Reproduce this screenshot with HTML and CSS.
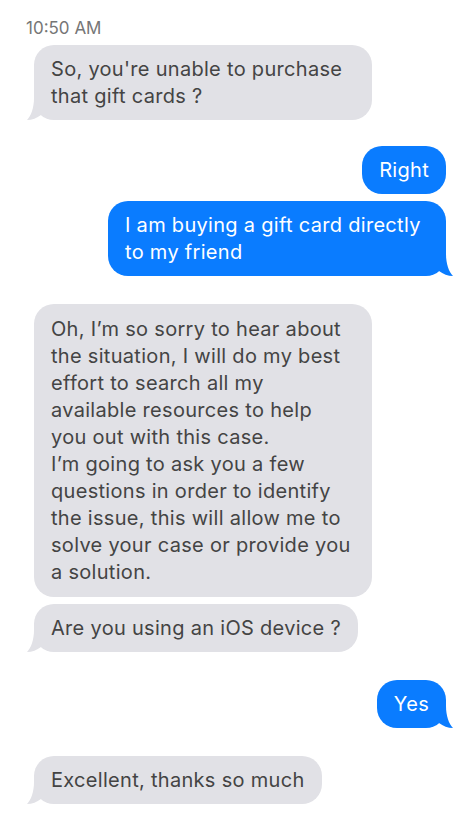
FILE: index.html
```html
<!DOCTYPE html>
<html>
<head>
<meta charset="utf-8">
<link rel="stylesheet" href="styles.css">
</head>
<body>
<div class="chat">
  <div class="time">10:50 AM</div>
  <div class="row in">
    <div class="bubble gray tailed">So, you're unable to purchase that gift cards ?<svg class="tail tail-l" viewBox="0 0 14 22" width="14" height="22"><path d="M7 0 C7 10 4 18 0 22 C5 22 10 20 14 17 L14 0 Z"/></svg></div>
  </div>
  <div class="group">
    <div class="row out">
      <div class="bubble blue">Right</div>
    </div>
    <div class="row out">
      <div class="bubble blue tailed">I am buying a gift card directly to my friend<svg class="tail tail-r" viewBox="0 0 14 22" width="14" height="22"><path d="M7 0 C7 10 10 18 14 22 C9 22 4 20 0 17 L0 0 Z"/></svg></div>
    </div>
  </div>
  <div class="group">
    <div class="row in">
      <div class="bubble gray long">Oh, I’m so sorry to hear about the situation, I will do my best effort to search all my<br>available resources to help<br>you out with this case.<br>I’m going to ask you a few questions in order to identify the issue, this will allow me to solve your case or provide you a solution.</div>
    </div>
    <div class="row in">
      <div class="bubble gray tailed">Are you using an iOS device ?<svg class="tail tail-l" viewBox="0 0 14 22" width="14" height="22"><path d="M7 0 C7 10 4 18 0 22 C5 22 10 20 14 17 L14 0 Z"/></svg></div>
    </div>
  </div>
  <div class="group">
    <div class="row out">
      <div class="bubble blue tailed">Yes<svg class="tail tail-r" viewBox="0 0 14 22" width="14" height="22"><path d="M7 0 C7 10 10 18 14 22 C9 22 4 20 0 17 L0 0 Z"/></svg></div>
    </div>
  </div>
  <div class="group">
    <div class="row in">
      <div class="bubble gray tailed">Excellent, thanks so much<svg class="tail tail-l" viewBox="0 0 14 22" width="14" height="22"><path d="M7 0 C7 10 4 18 0 22 C5 22 10 20 14 17 L14 0 Z"/></svg></div>
    </div>
  </div>
</div>
</body>
</html>
```

FILE: styles.css
```css
html, body {
  margin: 0;
  padding: 0;
  background: #ffffff;
}

.chat {
  font-family: Inter, "Noto Sans", sans-serif;
  padding: 18px 26px 0 26px;
  display: flex;
  flex-direction: column;
}

.time {
  font-size: 17px;
  line-height: 20px;
  color: #767676;
  margin-bottom: 7px;
}

.group {
  display: flex;
  flex-direction: column;
  gap: 7px;
  margin-top: 26px;
}

.group + .group {
  margin-top: 28px;
}

.row {
  display: flex;
}

.row.in {
  justify-content: flex-start;
  padding-left: 8px;
}

.row.out {
  justify-content: flex-end;
}

.bubble {
  position: relative;
  max-width: 338px;
  box-sizing: border-box;
  padding: 10.5px 17px;
  border-radius: 20px;
  font-size: 20px;
  letter-spacing: 0.3px;
  line-height: 27px;
}

.bubble.long {
  padding-top: 11.5px;
  padding-bottom: 11.5px;
}

.gray {
  background: #e1e1e6;
  color: #444444;
}

.blue {
  background: #0a7cff;
  color: #ffffff;
}

.tail {
  position: absolute;
  bottom: 0;
}

.tail-l {
  left: -7px;
}

.tail-l path {
  fill: #e1e1e6;
}

.tail-r {
  right: -7px;
}

.tail-r path {
  fill: #0a7cff;
}
```
